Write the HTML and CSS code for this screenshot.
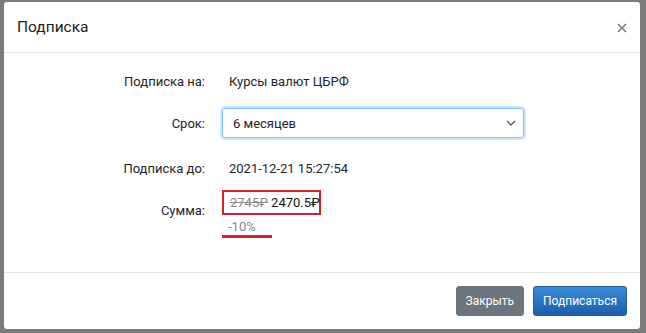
FILE: index.html
```html
<!DOCTYPE html>
<html>
<head>
	<title>Подписка</title>
	<link rel="stylesheet" href="styles.css">
</head>
<body>
	<div class="backdrop">
		<div class="modal">
			<div class="modal-header">
				<h5 class="modal-title">Подписка</h5>
				<span class="close">
					<svg width="10" height="10" viewBox="0 0 10 10"><path d="M1 1 L9 9 M9 1 L1 9" stroke="#6f6f6f" stroke-width="1.4"/></svg>
				</span>
			</div>
			<div class="modal-body">
				<div class="row row-first">
					<div class="label">Подписка на:</div>
					<div class="value">Курсы валют ЦБРФ</div>
				</div>
				<div class="row row-select">
					<div class="label">Срок:</div>
					<div class="select">
						<span>6 месяцев</span>
						<svg width="10" height="6" viewBox="0 0 10 6"><path d="M1 1 L5 5 L9 1" fill="none" stroke="#555" stroke-width="1.3"/></svg>
					</div>
				</div>
				<div class="row row-date">
					<div class="label">Подписка до:</div>
					<div class="value">2021-12-21 15:27:54</div>
				</div>
				<div class="row sum-row">
					<div class="label">Сумма:</div>
					<div class="sum">
						<div class="price-box">
							<s class="old">2745₽</s> <span class="new">2470.5₽</span>
						</div>
						<div class="discount">-10%</div>
						<div class="underline"></div>
					</div>
				</div>
			</div>
			<div class="modal-footer">
				<button class="btn btn-close">Закрыть</button>
				<button class="btn btn-primary">Подписаться</button>
			</div>
		</div>
	</div>
</body>
</html>
```

FILE: styles.css
```css
body {
	margin: 0;
	font-family: Roboto, 'Open Sans', sans-serif;
	font-size: 13px;
	color: #212529;
	background-color: #7b7b7b;
}

.backdrop {
	height: 333px;
	padding: 2px 6px 0 4px;
	box-sizing: border-box;
}

.modal {
	background-color: #fff;
	height: 327px;
	display: flex;
	flex-direction: column;
	border-radius: 3px;
}

.modal-header {
	display: flex;
	align-items: center;
	justify-content: space-between;
	height: 50px;
	padding: 0 13px 0 13px;
	border-bottom: 1px solid #e4e6e8;
}

.modal-title {
	margin: 0;
	font-size: 15.5px;
	font-weight: normal;
	color: #222;
}

.close {
	display: flex;
	padding-top: 2px;
}

.modal-body {
	flex: 1;
	padding-top: 13px;
}

.row {
	display: grid;
	grid-template-columns: 201px 302px;
	column-gap: 17px;
	align-items: center;
	min-height: 30px;
}

.row-first {
	margin-bottom: 12px;
}

.row-select {
	margin-bottom: 15px;
}

.row-date {
	margin-bottom: 7px;
}

.label {
	text-align: right;
}

.value {
	padding-left: 7px;
}

.select {
	height: 30px;
	box-sizing: border-box;
	border: 1px solid #80bdff;
	border-radius: 3px;
	box-shadow: 0 0 0 2px rgba(0, 123, 255, 0.18);
	display: flex;
	align-items: center;
	justify-content: space-between;
	padding: 0 7px 0 10px;
}

.sum-row {
	align-items: start;
}

.sum-row .label {
	padding-top: 13px;
}

.sum {
	display: flex;
	flex-direction: column;
	align-items: flex-start;
}

.price-box {
	box-sizing: border-box;
	width: 99px;
	border: 2px solid #d71f2b;
	padding: 2px 4px 2px 6px;
	line-height: 17px;
	white-space: nowrap;
}

.old {
	color: #888;
}

.new {
	color: #111;
}

.discount {
	color: #888;
	padding-left: 6px;
	line-height: 18px;
	margin-top: 3px;
}

.underline {
	width: 50px;
	height: 3px;
	background-color: #d71f2b;
	margin-top: -1px;
}

.modal-footer {
	height: 56px;
	border-top: 1px solid #e4e6e8;
	display: flex;
	justify-content: flex-end;
	align-items: center;
	gap: 9px;
	padding-right: 13px;
}

.btn {
	font-family: inherit;
	font-size: 12px;
	height: 30px;
	border-radius: 3px;
	color: #fff;
	padding: 0 9px;
	cursor: pointer;
}

.btn-close {
	background-color: #6c757d;
	border: 1px solid #6c757d;
}

.btn-primary {
	background: linear-gradient(#3a8ddc, #1b5ea9);
	border: 1px solid #1d5c9f;
}
```
